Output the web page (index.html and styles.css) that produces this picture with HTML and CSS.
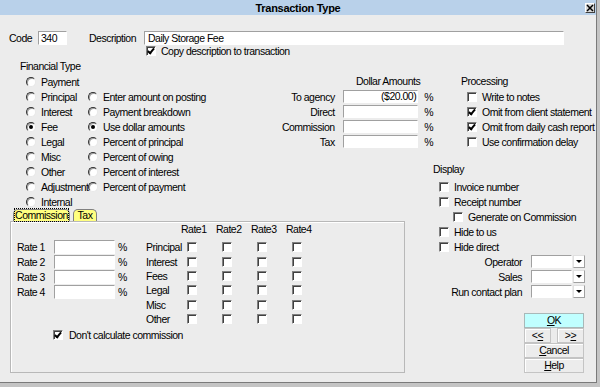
FILE: index.html
```html
<!DOCTYPE html>
<html lang="en">
<head>
  <meta charset="UTF-8">
  <title>Transaction Type</title>
  <link rel="stylesheet" href="styles.css">
</head>
<body>
  <div class="window">
    <div class="titlebar">
      <span></span>
      <span class="title">Transaction Type</span>
      <span class="close">
        <svg width="8" height="8" viewBox="0 0 8 8"><path d="M1 1 L7 7 M7 1 L1 7" stroke="#000" stroke-width="1.5"/></svg>
      </span>
    </div>

    <div class="content">
      <div class="code-row">
        <span class="lbl-code">Code</span>
        <div class="field code-field">340</div>
        <span class="lbl-desc">Description</span>
        <div class="field desc-field">Daily Storage Fee</div>
      </div>
      <div class="copy-row">
        <span class="check on"></span>
        <span>Copy description to transaction</span>
      </div>

      <div class="main">
        <!-- Financial type radios -->
        <div class="fin">
          <div class="caption">Financial Type</div>
          <div class="fin-cols">
            <div class="col1">
              <div class="opt"><span class="radio"></span>Payment</div>
              <div class="opt"><span class="radio"></span>Principal</div>
              <div class="opt"><span class="radio"></span>Interest</div>
              <div class="opt"><span class="radio on"></span>Fee</div>
              <div class="opt"><span class="radio"></span>Legal</div>
              <div class="opt"><span class="radio"></span>Misc</div>
              <div class="opt"><span class="radio"></span>Other</div>
              <div class="opt"><span class="radio"></span>Adjustment</div>
              <div class="opt"><span class="radio"></span>Internal</div>
            </div>
            <div class="col2">
              <div class="opt"><span class="radio"></span>Enter amount on posting</div>
              <div class="opt"><span class="radio"></span>Payment breakdown</div>
              <div class="opt"><span class="radio on"></span>Use dollar amounts</div>
              <div class="opt"><span class="radio"></span>Percent of principal</div>
              <div class="opt"><span class="radio"></span>Percent of owing</div>
              <div class="opt"><span class="radio"></span>Percent of interest</div>
              <div class="opt"><span class="radio"></span>Percent of payment</div>
            </div>
          </div>
        </div>

        <!-- Dollar amounts -->
        <div class="dollar">
          <div class="caption dollar-title">Dollar Amounts</div>
          <div class="amt-row"><span class="lbl">To agency</span><div class="field amt-field">($20.00)</div><span class="pct">%</span></div>
          <div class="amt-row"><span class="lbl">Direct</span><div class="field amt-field"></div><span class="pct">%</span></div>
          <div class="amt-row"><span class="lbl">Commission</span><div class="field amt-field"></div><span class="pct">%</span></div>
          <div class="amt-row"><span class="lbl">Tax</span><div class="field amt-field"></div><span class="pct">%</span></div>
        </div>

        <!-- Processing / display / buttons -->
        <div class="right">
          <div class="caption proc-title">Processing</div>
          <div class="proc">
            <div class="chk-row"><span class="check"></span>Write to notes</div>
            <div class="chk-row"><span class="check on"></span>Omit from client statement</div>
            <div class="chk-row"><span class="check on"></span>Omit from daily cash report</div>
            <div class="chk-row"><span class="check"></span>Use confirmation delay</div>
          </div>

          <div class="caption disp-title">Display</div>
          <div class="disp">
            <div class="chk-row"><span class="check"></span>Invoice number</div>
            <div class="chk-row"><span class="check"></span>Receipt number</div>
            <div class="chk-row sub"><span class="check"></span>Generate on Commission</div>
            <div class="chk-row"><span class="check"></span>Hide to us</div>
            <div class="chk-row"><span class="check"></span>Hide direct</div>
          </div>
          <div class="sel-row"><span class="lbl">Operator</span><div class="field sel-field"></div><span class="drop"></span></div>
          <div class="sel-row"><span class="lbl">Sales</span><div class="field sel-field"></div><span class="drop"></span></div>
          <div class="sel-row"><span class="lbl">Run contact plan</span><div class="field sel-field"></div><span class="drop"></span></div>

          <div class="buttons">
            <div class="btn ok"><u>O</u>K</div>
            <div class="btn-pair">
              <div class="btn">&lt;<u>&lt;</u></div>
              <div class="btn">&gt;<u>&gt;</u></div>
            </div>
            <div class="btn"><u>C</u>ancel</div>
            <div class="btn"><u>H</u>elp</div>
          </div>
        </div>

        <!-- Commission / Tax tabs -->
        <div class="tab-area">
          <div class="tabs">
            <div class="tab comm"><span class="focus">Commission</span></div>
            <div class="tab tax">Tax</div>
          </div>
          <div class="panel">
            <div class="panel-top">
              <div class="rates">
                <div class="rate-row"><span class="lbl">Rate 1</span><div class="field rate-field"></div><span class="pct">%</span></div>
                <div class="rate-row"><span class="lbl">Rate 2</span><div class="field rate-field"></div><span class="pct">%</span></div>
                <div class="rate-row"><span class="lbl">Rate 3</span><div class="field rate-field"></div><span class="pct">%</span></div>
                <div class="rate-row"><span class="lbl">Rate 4</span><div class="field rate-field"></div><span class="pct">%</span></div>
              </div>
              <div class="rate-grid">
                <span></span><span class="hd">Rate1</span><span class="hd">Rate2</span><span class="hd">Rate3</span><span class="hd">Rate4</span>
                <span class="rl">Principal</span><span class="cell"><span class="check"></span></span><span class="cell"><span class="check"></span></span><span class="cell"><span class="check"></span></span><span class="cell"><span class="check"></span></span>
                <span class="rl">Interest</span><span class="cell"><span class="check"></span></span><span class="cell"><span class="check"></span></span><span class="cell"><span class="check"></span></span><span class="cell"><span class="check"></span></span>
                <span class="rl">Fees</span><span class="cell"><span class="check"></span></span><span class="cell"><span class="check"></span></span><span class="cell"><span class="check"></span></span><span class="cell"><span class="check"></span></span>
                <span class="rl">Legal</span><span class="cell"><span class="check"></span></span><span class="cell"><span class="check"></span></span><span class="cell"><span class="check"></span></span><span class="cell"><span class="check"></span></span>
                <span class="rl">Misc</span><span class="cell"><span class="check"></span></span><span class="cell"><span class="check"></span></span><span class="cell"><span class="check"></span></span><span class="cell"><span class="check"></span></span>
                <span class="rl">Other</span><span class="cell"><span class="check"></span></span><span class="cell"><span class="check"></span></span><span class="cell"><span class="check"></span></span><span class="cell"><span class="check"></span></span>
              </div>
            </div>
            <div class="chk-row nocalc"><span class="check on"></span>Don't calculate commission</div>
          </div>
        </div>
      </div>
    </div>
  </div>
</body>
</html>
```

FILE: styles.css
```css
html, body {
  margin: 0;
}
body {
  width: 600px;
  height: 387px;
  overflow: hidden;
  background: #c4c4c4;
  font-family: "Liberation Sans", Arial, sans-serif;
  font-size: 10.5px;
  letter-spacing: -0.5px;
  color: #000;
}
.window {
  width: 596px;
  height: 382px;
  background: #ececec;
  border-right: 1px solid #7a7a7a;
  border-bottom: 1px solid #7a7a7a;
}
.titlebar {
  height: 15px;
  background: #b9d1ea;
  display: grid;
  grid-template-columns: 1fr auto 1fr;
  align-items: center;
}
.title {
  font-weight: bold;
  font-size: 11px;
  letter-spacing: -0.3px;
}
.close {
  justify-self: end;
  align-self: start;
  margin: 3px 1px 0 0;
  width: 10px;
  height: 10px;
  box-sizing: border-box;
  background: #d8d8d8;
  border: 1px solid;
  border-color: #fff #404040 #404040 #fff;
  display: flex;
  align-items: center;
  justify-content: center;
}
.content {
  padding: 16px 0 0 9px;
}

/* inputs */
.field {
  box-sizing: border-box;
  background: #fff;
  border: 1px solid;
  border-color: #a0a0a0 #fff #fff #a0a0a0;
  height: 14px;
  line-height: 12px;
  padding: 0 2px;
  white-space: nowrap;
  overflow: hidden;
}
.code-row {
  display: flex;
  align-items: center;
  height: 14px;
}
.lbl-code {
  width: 29px;
}
.code-field {
  width: 29px;
}
.lbl-desc {
  margin-left: 22px;
  width: 55px;
}
.desc-field {
  width: 420px;
  padding-left: 3px;
}
.copy-row {
  display: flex;
  align-items: center;
  gap: 5px;
  height: 12px;
  margin-left: 137px;
}

/* check boxes and radios */
.check {
  position: relative;
  flex: none;
  display: inline-block;
  width: 10px;
  height: 10px;
  box-sizing: border-box;
  background: #fff;
  border: 1px solid;
  border-color: #808080 #fff #fff #808080;
  box-shadow: inset 1px 1px #404040;
}
.check.on::after {
  content: "";
  position: absolute;
  left: 2px;
  top: 0;
  width: 2px;
  height: 5px;
  border: solid #000;
  border-width: 0 2px 2px 0;
  transform: rotate(40deg);
}
.radio {
  position: relative;
  flex: none;
  display: inline-block;
  width: 10px;
  height: 10px;
  box-sizing: border-box;
  border-radius: 50%;
  background: #fff;
  border: 1px solid;
  border-color: #303030 #e8e8e8 #e8e8e8 #303030;
  box-shadow: inset 1px 1px #a0a0a0;
}
.radio.on::after {
  content: "";
  position: absolute;
  left: 2px;
  top: 2px;
  width: 4px;
  height: 4px;
  border-radius: 50%;
  background: #000;
}

.main {
  margin-top: 2px;
  margin-left: -9px;
  padding-left: 9px;
  display: grid;
  grid-template-columns: 191px 233px 1fr;
  grid-template-rows: 150px auto;
}
.caption {
  height: 15px;
  line-height: 15px;
}

/* financial type */
.fin {
  padding-left: 11px;
}
.fin-cols {
  display: flex;
  padding-left: 6px;
}
.col1 {
  width: 62px;
}
.col2 {
  padding-top: 15px;
}
.opt {
  display: flex;
  align-items: center;
  gap: 5px;
  height: 15px;
  white-space: nowrap;
}

/* dollar amounts */
.dollar {
  padding-top: 15px;
}
.dollar-title {
  margin-left: 156px;
}
.amt-row {
  display: flex;
  align-items: center;
  height: 15px;
}
.amt-row .lbl {
  width: 147px;
  text-align: right;
}
.amt-field {
  width: 82px;
  height: 13px;
  line-height: 11px;
  margin-left: 8px;
  padding-right: 1px;
  text-align: right;
}
.pct {
  margin-left: 6px;
}

/* right column */
.right {
  grid-column: 3;
  grid-row: 1 / span 2;
  padding-top: 15px;
}
.proc-title {
  margin-left: 28px;
}
.chk-row {
  display: flex;
  align-items: center;
  gap: 5px;
  height: 15px;
  white-space: nowrap;
}
.proc .chk-row {
  margin-left: 34px;
}
.disp-title {
  margin-top: 13px;
  margin-bottom: 2px;
}
.disp .chk-row {
  margin-left: 6px;
}
.disp .chk-row.sub {
  margin-left: 20px;
}
.sel-row {
  display: flex;
  align-items: center;
  height: 15px;
}
.sel-row .lbl {
  width: 89px;
  text-align: right;
}
.sel-field {
  width: 41px;
  height: 13px;
  margin-left: 9px;
}
.drop {
  position: relative;
  width: 12px;
  height: 13px;
  box-sizing: border-box;
  margin-left: 1px;
  background: #fff;
  border: 1px solid;
  border-color: #e0e0e0 #a0a0a0 #a0a0a0 #e0e0e0;
}
.drop::after {
  content: "";
  position: absolute;
  left: 2px;
  top: 4px;
  border-left: 3px solid transparent;
  border-right: 3px solid transparent;
  border-top: 3px solid #000;
}

.buttons {
  margin: 14px 0 0 91px;
  width: 60px;
}
.btn {
  box-sizing: border-box;
  height: 15px;
  line-height: 13px;
  text-align: center;
  background: #ececec;
  border: 1px solid #c4c4c4;
  box-shadow: inset 1px 1px #fff;
}
.btn.ok {
  background: #c0ffff;
  border-color: #a8b8b8;
  box-shadow: none;
}
.btn-pair {
  display: flex;
  justify-content: space-between;
}
.btn-pair .btn {
  width: 27px;
}

/* tabs */
.tab-area {
  grid-column: 1 / span 2;
  grid-row: 2;
}
.tabs {
  display: flex;
  align-items: flex-end;
  gap: 3px;
  margin-left: 4px;
  height: 12px;
}
.tab {
  box-sizing: border-box;
  height: 12px;
  line-height: 10px;
  background: #ffff80;
  border: 1px solid #808080;
  border-bottom: 0;
  border-radius: 5px 5px 0 0;
  text-align: center;
}
.tab.comm {
  width: 57px;
}
.tab.tax {
  width: 24px;
}
.focus {
  outline: 1px dotted #000;
  outline-offset: 0;
}
.panel {
  margin-left: 1px;
  width: 395px;
  height: 152px;
  box-sizing: border-box;
  border: 1px solid #b8b8b8;
  box-shadow: inset 1px 1px #fff;
}
.panel-top {
  display: flex;
}
.rates {
  margin: 17px 0 0 6px;
  width: 129px;
}
.rate-row {
  display: flex;
  align-items: center;
  height: 15px;
}
.rate-row .lbl {
  width: 37px;
}
.rate-field {
  width: 61px;
}
.rate-row .pct {
  margin-left: 3px;
}
.rate-grid {
  display: grid;
  grid-template-columns: repeat(5, 35px);
  grid-template-rows: 18px repeat(6, 14.4px);
}
.hd {
  line-height: 14px;
}
.rl, .cell {
  display: flex;
  align-items: center;
}
.cell .check {
  margin-left: 6px;
}
.nocalc {
  margin: 1px 0 0 42px;
  gap: 6px;
}
```
